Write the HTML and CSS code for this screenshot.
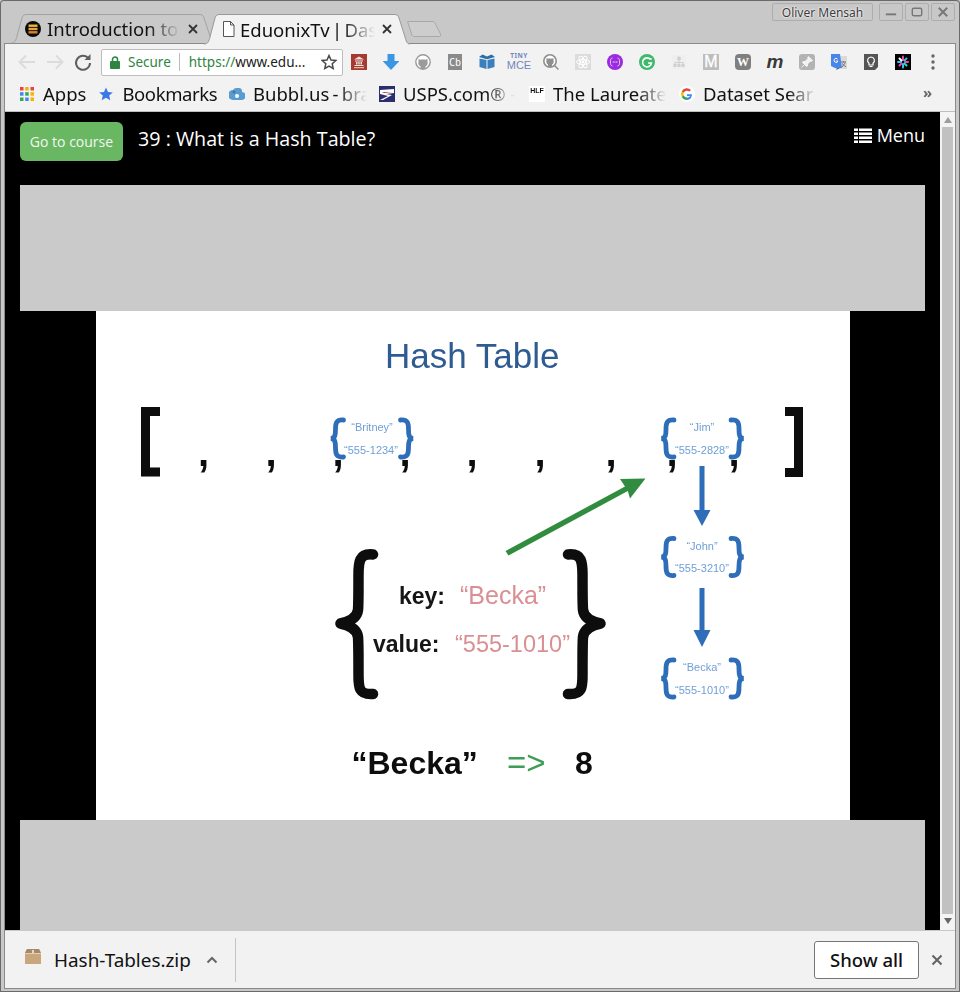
FILE: index.html
```html
<!DOCTYPE html>
<html lang="en">
<head>
<meta charset="utf-8">
<title>EduonixTv | Dashboard</title>
<link rel="stylesheet" href="styles.css">
</head>
<body>
<div class="window">
  <header class="tabstrip">
    <div class="tab tab-back">
      <svg class="tab-shape" viewBox="0 0 204 29" preserveAspectRatio="none"><path d="M0 29C4 29 5 26 6 22L11 4C12 1 13 .5 16 .5L188 .5C191 .5 192 1 193 4L199 22C200 26 201 29 204 29"/></svg>
      <svg class="fav" viewBox="0 0 16 16"><circle cx="8" cy="8" r="8" fill="#0b0b0b"/><rect x="3.5" y="3.5" width="9" height="2.4" fill="#e9b93c"/><rect x="3.5" y="6.8" width="9" height="2.4" fill="#e9a23c"/><rect x="3.5" y="10.1" width="9" height="2.4" fill="#d9822c"/></svg>
      <span class="tab-title tab-title-back">Introduction to</span>
      <svg class="tab-x tab-x-back" viewBox="0 0 10 10"><path d="M1 1L9 9M9 1L1 9" stroke="#333" stroke-width="1.800"/></svg>
    </div>
    <div class="tab tab-front">
      <svg class="tab-shape" viewBox="0 0 206 30" preserveAspectRatio="none"><path d="M0 30C4 30 5 27 6 23L11 4C12 1 13 .5 16 .5L190 .5C193 .5 194 1 195 4L201 23C202 27 203 30 206 30"/></svg>
      <svg class="fav fav-doc" viewBox="0 0 13 16"><path d="M1.5 .5H8.5L12 4V15.500H1.500ZM8.500 .5V4H12" fill="#fff" stroke="#555"/></svg>
      <span class="tab-title tab-title-front">EduonixTv | Das</span>
      <svg class="tab-x tab-x-front" viewBox="0 0 10 10"><path d="M1 1L9 9M9 1L1 9" stroke="#333" stroke-width="1.800"/></svg>
    </div>
    <svg class="newtab" viewBox="0 0 34 16"><path d="M.5 .5H26C27 .5 27.500 1 28 2L33.500 13C34 15 33 15.500 32 15.500H7C6 15.500 5.500 15 5 14Z"/></svg>
    <div class="winbar">
      <span class="userchip">Oliver Mensah</span>
      <span class="winbtn"><svg viewBox="0 0 23 17"><rect x="6" y="10" width="11" height="2" fill="#777"/></svg></span>
      <span class="winbtn"><svg viewBox="0 0 23 17"><rect x="6.500" y="4.500" width="10" height="8" rx="1.500" fill="none" stroke="#777" stroke-width="1.500"/></svg></span>
      <span class="winbtn"><svg viewBox="0 0 23 17"><path d="M7 4L16 13M16 4L7 13" stroke="#777" stroke-width="2"/></svg></span>
    </div>
  </header>

  <div class="browser">
    <div class="toolbar">
      <div class="navrow">
        <svg class="navbtn" viewBox="0 0 28 28"><path d="M22 14H7M13 7.500L6.500 14L13 20.500" fill="none" stroke="#dcdcdc" stroke-width="2"/></svg>
        <svg class="navbtn" viewBox="0 0 28 28"><path d="M6 14H21M15 7.500L21.500 14L15 20.500" fill="none" stroke="#dcdcdc" stroke-width="2"/></svg>
        <svg class="navbtn" viewBox="0 0 28 28"><path d="M19.500 10.500A7 7 0 1 0 21 15" fill="none" stroke="#5f5f5f" stroke-width="2"/><path d="M15.500 12H21.500V6Z" fill="#5f5f5f"/></svg>
        <div class="omnibox">
          <svg class="lock" viewBox="0 0 10 13"><path d="M2.500 6V3.500A2.500 2.500 0 0 1 7.500 3.500V6" fill="none" stroke="#2e8540" stroke-width="1.500"/><rect y="5" width="10" height="8" rx="1" fill="#2e8540"/></svg>
          <span class="secure">Secure</span>
          <span class="omni-sep"></span>
          <span class="url"><span class="scheme">https://</span>www.edu...</span>
          <svg class="omni-star" viewBox="0 0 16 16"><path d="M8 1.500L10 6L14.800 6.500L11.200 9.700L12.200 14.500L8 12L3.800 14.500L4.800 9.700L1.200 6.500L6 6Z" fill="none" stroke="#4a4a4a" stroke-width="1.500"/></svg>
        </div>
        <div class="extensions">
          <span class="ext"><svg viewBox="0 0 16 16"><rect width="16" height="16" fill="#a63a33"/><path d="M8 2.500L13 5.500H3ZM4 6.500H12V7.500H4ZM5 8H6.500V10.500H5ZM7.300 8H8.700V10.500H7.300ZM9.500 8H11V10.500H9.500ZM3.500 11H12.500V12H3.500Z" fill="#f3e3dd"/><rect x="3" y="13" width="10" height="1.200" fill="#dba"/></svg></span>
          <span class="ext"><svg viewBox="0 0 16 16"><path d="M4.500 0H11.500V7H16.500L8 16L-.5 7H4.500Z" fill="#3b97e3"/></svg></span>
          <span class="ext"><svg viewBox="0 0 16 16"><circle cx="8" cy="8" r="7.200" fill="#fff" stroke="#9b9b9b" stroke-width="1.400"/><path d="M5.500 15V12.500C3.500 11.500 3 9.500 3.500 7.500L3.500 5L5.500 5.800C7 5.400 9 5.400 10.500 5.800L12.500 5L12.500 7.500C13 9.500 12.500 11.500 10.500 12.500V15Z" fill="#9b9b9b"/></svg></span>
          <span class="ext ext-cb">Cb</span>
          <span class="ext"><svg viewBox="0 0 16 16"><path d="M.5 4.500L7.500 6V15L.5 13ZM8.500 6L15.500 4.500V13L8.500 15Z" fill="#3a80bd"/><path d="M0 3L3.500 .5L8 2.500L12.500 .5L16 3L8 5.300Z" fill="#2b6ea8"/></svg></span>
          <span class="ext ext-tiny"><span class="tiny-a">TINY</span><span class="tiny-b">MCE</span></span>
          <span class="ext"><svg viewBox="0 0 16 16"><circle cx="7" cy="7" r="6.200" fill="#fff" stroke="#8f8f8f" stroke-width="1.600"/><path d="M5 13V10.500C3.500 9.500 3 8 3.500 6L3.500 4L5 4.700C6.300 4.400 7.700 4.400 9 4.700L10.500 4L10.500 6C11 8 10.500 9.500 9 10.500V13Z" fill="#8f8f8f"/><path d="M11.500 11.500L15.500 15.500" stroke="#8f8f8f" stroke-width="1.500"/></svg></span>
          <span class="ext"><svg viewBox="0 0 16 16"><rect width="16" height="16" fill="#dcdcdc"/><g fill="none" stroke="#fff" stroke-width="1"><ellipse cx="8" cy="8" rx="6.500" ry="2.500"/><ellipse cx="8" cy="8" rx="6.500" ry="2.500" transform="rotate(60 8 8)"/><ellipse cx="8" cy="8" rx="6.500" ry="2.500" transform="rotate(120 8 8)"/></g><circle cx="8" cy="8" r="1.400" fill="#fff"/></svg></span>
          <span class="ext"><svg viewBox="0 0 16 16"><circle cx="8" cy="8" r="8" fill="#9a2be0"/><path d="M5.500 4C3.500 4.500 3.500 5.500 3.500 8S3.500 11.500 5.500 12M10.500 4C12.500 4.500 12.500 5.500 12.500 8S12.500 11.500 10.500 12" fill="none" stroke="#e9c9ff"/><path d="M5.700 8H6.800M7.500 8H8.500M9.200 8H10.300" stroke="#fff"/></svg></span>
          <span class="ext"><svg viewBox="0 0 16 16"><circle cx="8" cy="8" r="8" fill="#3dba6c"/><path d="M11.500 5.500A4.500 4.500 0 1 0 12.500 9H9" fill="none" stroke="#fff" stroke-width="1.700"/><path d="M10 4H12.500V6.500Z" fill="#fff"/></svg></span>
          <span class="ext"><svg viewBox="0 0 16 16"><rect x="1" y="1" width="14" height="14" fill="#efefef"/><g fill="#cfcfcf"><circle cx="8" cy="4.500" r="2"/><rect x="2.500" y="10" width="3" height="3"/><rect x="6.500" y="10" width="3" height="3"/><rect x="10.500" y="10" width="3" height="3"/><path d="M7.500 6H8.500V8H12.500V10H11.500V9H8.500V10H7.500V9H4.500V10H3.500V8H7.500Z"/></g></svg></span>
          <span class="ext ext-m">M</span>
          <span class="ext ext-w">W</span>
          <span class="ext ext-mi">m</span>
          <span class="ext"><svg viewBox="0 0 16 16"><rect width="16" height="16" rx="3" fill="#b3b3b3"/><path d="M9.500 2.500L13.500 6.500L12.500 7.500L11.500 7L8.500 10L8.500 12L7.500 12.500L3.500 8.500L4 7.500L6 7.500L9 4.500L8.500 3.500ZM5.500 10.500L2.500 13.500" fill="#f2f2f2" stroke="#f2f2f2"/></svg></span>
          <span class="ext"><svg viewBox="0 0 16 16"><rect x="5" y="2" width="11" height="13" fill="#dadada"/><path d="M0 0H9L11 14H4L0 12Z" fill="#4a86e8"/><path d="M6 14L5 16L9 14Z" fill="#2a56c8"/><path d="M6.500 5A2 2 0 1 0 7 7H5.200" fill="none" stroke="#fff"/><path d="M10 8H15M12.500 7V8.500M11 13L14.500 8.500M11 9.500L15 13" fill="none" stroke="#777"/></svg></span>
          <span class="ext"><svg viewBox="0 0 16 16"><path d="M1 0H15V13L12 16H1Z" fill="#555"/><path d="M8 3A3.500 3.500 0 0 0 6 9.300V11H10V9.300A3.500 3.500 0 0 0 8 3ZM6.500 12.500H9.500" fill="none" stroke="#fff" stroke-width="1.200"/></svg></span>
          <span class="ext"><svg viewBox="0 0 16 16"><rect width="16" height="16" fill="#000"/><g stroke-width="2" stroke-linecap="round"><path d="M8 2.500V6" stroke="#ff3ea5"/><path d="M8 10V13.500" stroke="#26c6f9"/><path d="M3 8H6" stroke="#26c6f9"/><path d="M10 8H13" stroke="#ff3ea5"/><path d="M4.500 4.500L6.500 6.500" stroke="#fff"/><path d="M9.500 9.500L11.500 11.500" stroke="#1de9b6"/><path d="M11.500 4.500L9.500 6.500" stroke="#26c6f9"/><path d="M4.500 11.500L6.500 9.500" stroke="#ff3ea5"/></g></svg></span>
          <span class="ext ext-menu"><svg viewBox="0 0 4 16"><circle cx="2" cy="2" r="1.700" fill="#666"/><circle cx="2" cy="8" r="1.700" fill="#666"/><circle cx="2" cy="14" r="1.700" fill="#666"/></svg></span>
        </div>
      </div>
      <div class="bookmarks">
        <span class="bm bm-apps">
          <svg class="bm-ico" viewBox="0 0 14 14"><rect width="3.500" height="3.500" fill="#e8453c"/><rect x="5.200" width="3.500" height="3.500" fill="#f4b400"/><rect x="10.500" width="3.500" height="3.500" fill="#e8453c"/><rect y="5.200" width="3.500" height="3.500" fill="#4285f4"/><rect x="5.200" y="5.200" width="3.500" height="3.500" fill="#34a853"/><rect x="10.500" y="5.200" width="3.500" height="3.500" fill="#f4b400"/><rect y="10.500" width="3.500" height="3.500" fill="#34a853"/><rect x="5.200" y="10.500" width="3.500" height="3.500" fill="#4285f4"/><rect x="10.500" y="10.500" width="3.500" height="3.500" fill="#f4b400"/></svg>
          <span>Apps</span>
        </span>
        <span class="bm bm-star">
          <svg class="bm-ico" viewBox="0 0 14 14"><path d="M7 .5L9 5L13.800 5.400L10.200 8.500L11.300 13.300L7 10.800L2.700 13.300L3.800 8.500L.2 5.400L5 5Z" fill="#3b78e7"/></svg>
          <span class="bm-star-label">Bookmarks</span>
        </span>
        <span class="bm bm-bubbl">
          <svg class="bm-ico" viewBox="0 0 16 14"><path d="M4 3A4 4 0 0 1 8 1H10A3.500 3.500 0 0 1 13 5A4 4 0 0 1 12 13H4A4.500 4.500 0 0 1 4 3Z" fill="#5a9bd0"/><circle cx="8" cy="9" r="2" fill="#fff"/><circle cx="5" cy="5" r="1.500" fill="#3b7ab0"/></svg>
          <span class="fade fade-bubbl">Bubbl.us - bra</span>
        </span>
        <span class="bm bm-usps">
          <svg class="bm-ico" viewBox="0 0 16 16"><rect width="16" height="16" fill="#2c2f6e"/><path d="M1 4L15 3V7L7 8L13 9L4 14H1L9 10L1 8Z" fill="#fff"/><path d="M3 6H13L5 7Z" fill="#b33"/></svg>
          <span class="fade fade-usps">USPS.com® -</span>
        </span>
        <span class="bm bm-hlf">
          <span class="hlf-ico">HLF</span>
          <span class="fade fade-hlf">The Laureate</span>
        </span>
        <span class="bm bm-g">
          <svg class="bm-ico" viewBox="0 0 16 16"><circle cx="8" cy="8" r="8" fill="#fff"/><path d="M13 8.200H8V10H11A3.200 3.200 0 0 1 8 11.500V14A6 6 0 0 0 13 8.200Z" fill="#4285f4"/><path d="M8 11.500A3.500 3.500 0 0 1 4.700 9.200L2.700 10.800A6 6 0 0 0 8 14Z" fill="#34a853"/><path d="M4.700 9.200A3.500 3.500 0 0 1 4.700 6.800L2.700 5.200A6 6 0 0 0 2.700 10.800Z" fill="#fbbc05"/><path d="M4.700 6.800A3.500 3.500 0 0 1 10.300 5.600L12 4A6 6 0 0 0 2.700 5.200Z" fill="#ea4335"/></svg>
          <span class="fade fade-g">Dataset Sear</span>
        </span>
        <span class="bm-more">»</span>
      </div>
    </div>

    <div class="viewport">
      <main class="page">
        <div class="topbar">
          <a class="course-btn">Go to course</a>
          <h1 class="lesson">39 : What is a Hash Table?</h1>
          <a class="menu">
            <svg class="menu-ico" viewBox="0 0 18 15"><path d="M0 .5H4V3H0ZM5 .5H18V3H5ZM0 4.500H4V7H0ZM5 4.500H18V7H5ZM0 8.500H4V11H0ZM5 8.500H18V11H5ZM0 12.500H4V15H0ZM5 12.500H18V15H5Z" fill="#fff"/></svg>
            <span>Menu</span>
          </a>
        </div>
        <div class="player">
          <div class="band band-top"></div>
          <div class="video">
            <svg class="slide" viewBox="96 311 754 509">
              <defs>
                <filter id="soft"><feGaussianBlur stdDeviation="0.55"/></filter>
                <g id="minibrace" fill="none" stroke="#2f6db8" stroke-width="4.800" stroke-linecap="round">
                  <path d="M-28.500 -18.500C-36 -19 -36.500 -15 -36.500 -9C-36.500 -3 -37 -.5 -41 0C-37 .5 -36.500 3 -36.500 9C-36.500 15 -36 19 -28.500 18.500"/>
                  <path d="M28.500 -18.500C36 -19 36.500 -15 36.500 -9C36.500 -3 37 -.5 41 0C37 .5 36.500 3 36.500 9C36.500 15 36 19 28.500 18.500"/>
                </g>
              </defs>
              <rect x="96" y="311" width="754" height="509" fill="#fff"/>
              <g filter="url(#soft)">
                <text class="s-title" x="385" y="368">Hash Table</text>
                <path d="M160 411.500H145.500V472H160" class="s-bracket"/>
                <path d="M785 411.500H798.500V472.500H785" class="s-bracket"/>
                <g class="s-commas">
                  <text x="203.500" y="466">,</text><text x="271" y="466">,</text><text x="338" y="466">,</text><text x="405" y="466">,</text><text x="472" y="466">,</text><text x="540" y="466">,</text><text x="611" y="466">,</text><text x="672" y="466">,</text><text x="734" y="466">,</text>
                </g>

                <use href="#minibrace" x="372" y="438.500"/>
                <text class="s-mini" x="372" y="431">“Britney”</text>
                <text class="s-mini" x="371" y="453.500">“555-1234”</text>

                <use href="#minibrace" x="702.500" y="438.500"/>
                <text class="s-mini" x="702" y="431">“Jim”</text>
                <text class="s-mini" x="702" y="453.500">“555-2828”</text>

                <use href="#minibrace" x="702.500" y="557"/>
                <text class="s-mini" x="702" y="549.500">“John”</text>
                <text class="s-mini" x="702" y="572">“555-3210”</text>

                <use href="#minibrace" x="702.500" y="678.500"/>
                <text class="s-mini" x="702" y="671">“Becka”</text>
                <text class="s-mini" x="702" y="693.500">“555-1010”</text>

                <path class="s-blue" d="M699.500 466H704.500V510H710.500L702 526L693.500 510H699.500Z"/>
                <path class="s-blue" d="M699.500 588H704.500V630H710.500L702 647L693.500 630H699.500Z"/>
                <path class="s-green" d="M505.500 551L625 486.500L620 479L645.500 478.500L630 498.500L627.800 491L508.500 555.500Z"/>

                <path class="s-brace" d="M373 554.500C359 553 358.500 562 358.500 575C358.500 590 358.500 604 358 610C357 618 350 621.500 340.500 623.500C350 625.500 357 629 358 637C358.500 643 358.500 660 358.500 675C358.500 688 359 695 373 694"/>
                <path class="s-brace" d="M568 554.500C582 553 582.500 562 582.500 575C582.500 590 582.500 604 583 610C584 618 591 621.500 600.500 623.500C591 625.500 584 629 583 637C582.500 643 582.500 660 582.500 675C582.500 688 582 695 568 694"/>

                <text class="s-key" x="399" y="604">key:</text>
                <text class="s-val" x="460" y="604">“Becka”</text>
                <text class="s-key" x="373" y="652">value:</text>
                <text class="s-val s-val-num" x="455" y="652">“555-1010”</text>

                <text class="s-big" x="351.500" y="774">“Becka”</text>
                <text class="s-arrow" x="507" y="774">=&gt;</text>
                <text class="s-big" x="575" y="774">8</text>
              </g>
            </svg>
          </div>
          <div class="band band-bottom"></div>
        </div>
      </main>
      <aside class="scrollbar">
        <span class="sb-up"></span>
        <span class="sb-thumb"></span>
        <span class="sb-down"></span>
      </aside>
    </div>

    <footer class="downloads">
      <svg class="zip" viewBox="0 0 16 15"><path d="M2 0H14L16 4V15H0V4Z" fill="#c9a77e"/><path d="M2 0H14L16 4H0Z" fill="#a58a68"/><rect y="4" width="16" height="1" fill="#e4d0b4"/><rect x="7" y="1" width="2" height="3" fill="#e8d8c2"/></svg>
      <span class="dl-name">Hash-Tables.zip</span>
      <svg class="dl-caret" viewBox="0 0 12 8"><path d="M1.500 6.500L6 2L10.500 6.500" fill="none" stroke="#666" stroke-width="2"/></svg>
      <span class="dl-sep"></span>
      <button class="show-all">Show all</button>
      <svg class="dl-close" viewBox="0 0 12 12"><path d="M1.500 1.500L10.500 10.500M10.500 1.500L1.500 10.500" stroke="#5f6368" stroke-width="2"/></svg>
    </footer>
  </div>
</div>
</body>
</html>
```

FILE: styles.css
```css
* { box-sizing: border-box; }
html, body { margin: 0; padding: 0; }
body { width: 960px; height: 992px; overflow: hidden; background: #c8c8c8; }

.window {
  width: 960px; height: 992px;
  display: flex; flex-direction: column;
  background: #c8c8c8;
  padding: 0 4px 3px 4px;
  box-shadow: inset 0 0 0 1px #6a6a6a;
  border-radius: 4px 4px 0 0;
  font-family: "Noto Sans", sans-serif;
  color: #111;
}

/* Tab strip */
.tabstrip { height: 43px; flex: none; display: flex; align-items: flex-end; position: relative; }
.tab { position: relative; height: 29px; display: flex; align-items: center; font-size: 18.500px; flex: none; }
.tab-shape { position: absolute; left: 0; top: 0; width: 100%; height: 100%; overflow: visible; }
.tab-back { margin-left: 7px; width: 204px; padding-left: 14px; }
.tab-back .tab-shape path { fill: #c9c9c9; stroke: #a3a3a3; }
.tab-front { margin-left: -11px; width: 206px; padding-left: 18px; height: 30px; margin-bottom: -1px; z-index: 2; }
.tab-front .tab-shape path { fill: #f2f2f2; stroke: #999; }
.fav { position: relative; width: 16px; height: 16px; flex: none; }
.fav-doc { width: 13px; }
.tab-title { position: relative; white-space: nowrap; overflow: hidden; display: block; -webkit-mask-image: linear-gradient(to right, #000 76%, transparent 100%); mask-image: linear-gradient(to right, #000 76%, transparent 100%); }
.tab-title-back { width: 133px; margin-left: 6px; }
.tab-title-front { width: 135px; margin-left: 5px; word-spacing: -2.500px; }
.tab-x { position: relative; width: 10px; height: 10px; flex: none; }
.tab-x-back { margin-left: 8px; }
.tab-x-front { margin-left: 7px; }
.newtab { width: 34px; height: 16px; margin-left: -3px; margin-bottom: 6px; flex: none; }
.newtab path { fill: #cdcdcd; stroke: #a8a8a8; }
.winbar { margin-left: auto; margin-right: 1px; align-self: flex-start; margin-top: 3px; display: flex; gap: 2px; }
.userchip { width: 101px; height: 18px; margin-right: 4px; display: flex; align-items: center; justify-content: center; border: 1px solid #adadad; border-radius: 2px; font-size: 12px; color: #3a3a3a; text-shadow: 0 0 2px #fff, 0 0 2px #fff; }
.winbtn { width: 24px; height: 18px; border: 1px solid #adadad; border-radius: 2px; display: block; }
.winbtn svg { display: block; width: 100%; height: 100%; }

/* Browser body */
.browser { flex: 1; min-height: 0; display: flex; flex-direction: column; border: 1px solid #8a8a8a; background: #f2f2f2; }
.toolbar { height: 68px; flex: none; background: #f2f2f2; border-bottom: 1px solid #bdbdbd; }
.navrow { height: 36px; display: flex; align-items: center; padding-left: 8px; }
.navbtn { width: 28px; height: 28px; flex: none; }
.omnibox { margin-left: 4px; width: 242px; height: 27px; background: #fff; border: 1px solid #bdbdbd; border-radius: 2px; display: flex; align-items: center; padding-left: 8px; font-size: 13.500px; flex: none; }
.lock { width: 10px; height: 13px; flex: none; }
.secure { margin-left: 8px; color: #2e8540; }
.omni-sep { width: 1px; height: 18px; background: #bbb; margin-left: 8px; }
.url { margin-left: 9px; white-space: nowrap; color: #1c1c1c; }
.scheme { color: #2e8540; }
.omni-star { width: 16px; height: 16px; margin-left: auto; margin-right: 5px; flex: none; }
.extensions { display: flex; align-items: center; }
.ext { width: 32px; height: 16px; flex: none; display: flex; align-items: center; justify-content: center; }
.ext svg { width: 16px; height: 16px; display: block; }
.ext-cb { font-family: "DejaVu Sans Mono", monospace; font-size: 10px; color: #fff; background: #8a8a8a; width: 14px; margin: 0 9px; }
.ext-tiny { flex-direction: column; color: #7286bb; line-height: 1; }
.tiny-a { font-size: 6.500px; font-weight: 700; letter-spacing: .5px; }
.tiny-b { font-size: 11px; font-family: "Liberation Sans", sans-serif; font-weight: 400; }
.ext-m { width: 16px; margin: 0 8px; font-family: "Liberation Sans", sans-serif; font-size: 16px; color: #fff; background: #bdbdbd; -webkit-text-stroke: .3px #fff; }
.ext-w { width: 16px; margin: 0 8px; font-family: "Liberation Serif", serif; font-size: 12px; font-weight: 700; color: #fff; background: #7f7f7f; border-radius: 4px; }
.ext-mi { font-family: "Liberation Sans", sans-serif; font-weight: 700; font-style: italic; font-size: 19px; color: #3a3a3a; line-height: 16px; }
.ext-menu { width: 28px; }
.ext-menu svg { width: 4px; }

.bookmarks { height: 31px; display: flex; align-items: center; padding-bottom: 4px; font-size: 18.500px; position: relative; }
.bm { display: flex; align-items: center; white-space: nowrap; flex: none; }
.bm-ico { width: 16px; height: 16px; flex: none; margin-right: 8px; }
.bm-apps { margin-left: 15px; }
.bm-apps .bm-ico { width: 14px; height: 14px; margin-right: 9px; }
.bm-star { margin-left: 13px; }
.bm-star .bm-ico { width: 14px; height: 14px; margin-right: 9px; }
.bm-star-label { letter-spacing: -.4px; }
.bm-bubbl { position: absolute; left: 224px; }
.bm-usps { position: absolute; left: 374px; }
.bm-hlf { position: absolute; left: 524px; }
.bm-g { position: absolute; left: 674px; }
.hlf-ico { width: 16px; height: 16px; margin-right: 8px; background: #fff; font-family: "Liberation Sans", sans-serif; font-size: 7px; font-weight: 700; line-height: 10px; text-align: center; flex: none; }
.fade { display: block; overflow: hidden; -webkit-mask-image: linear-gradient(to right, #000 75%, transparent 100%); mask-image: linear-gradient(to right, #000 75%, transparent 100%); }
.fade-bubbl { width: 114px; word-spacing: -1.500px; }
.fade-usps { width: 112px; }
.fade-hlf { width: 113px; }
.fade-g { width: 113px; }
.bm-more { position: absolute; left: 918px; color: #666; font-size: 15px; font-weight: 700; top: 2px; }

/* Page */
.viewport { flex: 1; min-height: 0; display: flex; }
.page { width: 935px; flex: none; background: #000; padding: 0 15px; display: flex; flex-direction: column; font-family: "Open Sans", sans-serif; }
.topbar { height: 73px; flex: none; display: flex; align-items: flex-start; padding-top: 10px; color: #fff; }
.course-btn { width: 103px; height: 39px; background: #69b763; border-radius: 6px; font-size: 14px; color: #f2f7f0; display: flex; align-items: center; justify-content: center; flex: none; }
.lesson { margin: 3px 0 0 15px; font-size: 19.700px; font-weight: 400; line-height: 28px; color: #fff; }
.menu { margin-left: auto; display: flex; align-items: center; font-size: 18px; line-height: 27px; color: #fff; }
.menu-ico { width: 18px; height: 15px; margin-right: 5px; }
.player { flex: 1; min-height: 0; display: flex; flex-direction: column; }
.band { background: #cacaca; flex: none; }
.band-top { height: 126px; }
.band-bottom { flex: 1; }
.video { height: 509px; flex: none; display: flex; justify-content: center; padding-left: 1px; }
.slide { width: 754px; height: 509px; display: block; }

.s-title { font: 35px "Liberation Sans", sans-serif; fill: #2f5b91; }
.s-bracket { fill: none; stroke: #0a0a0a; stroke-width: 9; stroke-linejoin: miter; }
.s-commas text { font: 700 40px "Liberation Sans", sans-serif; fill: #111; text-anchor: middle; }
.s-mini { font: 11px "Liberation Sans", sans-serif; fill: #6f9ed6; text-anchor: middle; }
.s-blue { fill: #2f6db8; }
.s-green { fill: #338c3f; }
.s-brace { fill: none; stroke: #0a0a0a; stroke-width: 10.500; stroke-linecap: round; stroke-linejoin: round; }
.s-key { font: 700 23px "Liberation Sans", sans-serif; fill: #141414; }
.s-val { font: 25px "Liberation Sans", sans-serif; fill: #da8f93; }
.s-val-num { font-size: 23.500px; }
.s-big { font: 700 32px "Liberation Sans", sans-serif; fill: #111; }
.s-arrow { font: 33px "Liberation Sans", sans-serif; fill: #3f9d56; }

/* Scrollbar */
.scrollbar { width: 15px; flex: none; background: #f4f4f4; display: flex; flex-direction: column; align-items: center; }
.sb-up { width: 0; height: 0; margin-top: 5px; border: 4.500px solid transparent; border-top: 0; border-bottom: 6px solid #9d9d9d; flex: none; }
.sb-thumb { width: 11px; margin-top: 4px; flex: 1; background: #c1c1c1; }
.sb-down { width: 0; height: 0; margin: 4px 0 6px; border: 4.500px solid transparent; border-bottom: 0; border-top: 6px solid #666; flex: none; }

/* Download shelf */
.downloads { height: 58px; flex: none; display: flex; align-items: center; border-top: 1px solid #c8c8c8; background: #f2f2f2; font-size: 18.900px; }
.zip { width: 16px; height: 15px; margin-left: 20px; margin-top: -6px; flex: none; }
.dl-name { margin-left: 13px; width: 137px; white-space: nowrap; }
.dl-caret { width: 12px; height: 8px; margin-left: 15px; flex: none; }
.dl-sep { width: 1px; height: 44px; margin-left: 17px; background: #c4c4c4; flex: none; }
.show-all { margin-left: auto; width: 105px; height: 38px; background: #fff; border: 1px solid #767676; border-radius: 3px; font: 500 18.500px "Noto Sans", sans-serif; color: #111; padding: 0; }
.dl-close { width: 12px; height: 12px; margin: 0 12px 0 12px; flex: none; }
```
